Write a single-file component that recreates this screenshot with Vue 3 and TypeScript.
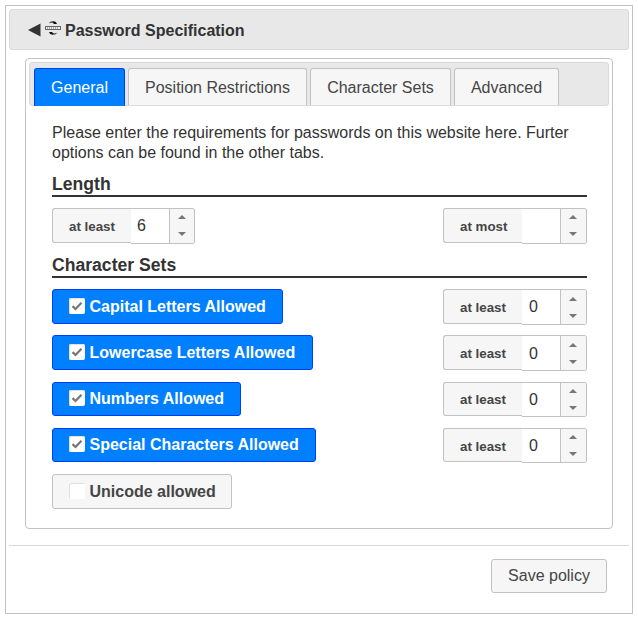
<script setup lang="ts">
import { ref } from 'vue'

interface CharacterSet {
  label: string
  allowed: boolean
  minimum?: string
  height: number
  gap: number
  width: number
}

const tabs = [
  { label: 'General', width: 91 },
  { label: 'Position Restrictions', width: 179 },
  { label: 'Character Sets', width: 141 },
  { label: 'Advanced', width: 105 },
]
const activeTab = ref('General')

const lengths = ref([
  { label: 'at least', value: '6' },
  { label: 'at most', value: '' },
])

const sets = ref<CharacterSet[]>([
  { label: 'Capital Letters Allowed', allowed: true, minimum: '0', width: 231, height: 35, gap: 11 },
  { label: 'Lowercase Letters Allowed', allowed: true, minimum: '0', width: 261, height: 35, gap: 12 },
  { label: 'Numbers Allowed', allowed: true, minimum: '0', width: 189, height: 34, gap: 12 },
  { label: 'Special Characters Allowed', allowed: true, minimum: '0', width: 264, height: 34, gap: 12 },
  { label: 'Unicode allowed', allowed: false, width: 180, height: 35, gap: 0 },
])

function step(item: { value?: string; minimum?: string }, key: 'value' | 'minimum', delta: number) {
  item[key] = String(Math.max(0, Number(item[key] || 0) + delta))
}
</script>

<template>
  <main class="dialog">
    <header class="titlebar">
      <svg class="back" viewBox="0 0 13 14"><path d="M0 7 12.5 .5v13z" /></svg>
      <svg class="logo" viewBox="0 0 16 14">
        <path d="M3.5 2.5Q5 0 9 .2l1.5 1V.2L12 3H8l1-1Q6 1 3.5 2.5z" fill="#111" />
        <path d="M12.5 11.5Q11 14 7 13.8l-1.5-1v1L4 11h4l-1 1q3 1 5.500-.5z" fill="#111" />
        <rect x=".5" y="5.500" width="15" height="3" fill="#eee" stroke="#666" />
        <path d="M2.500 6v2M4.500 6v2M6.500 6v2M8.500 6v2M10.500 6v2M12.500 6v2" stroke="#999" stroke-width=".8" />
      </svg>
      <h1>Password Specification</h1>
    </header>

    <section class="panel">
      <nav class="tabs">
        <button
          v-for="tab in tabs"
          :key="tab.label"
          class="tab"
          :class="{ active: tab.label === activeTab }"
          :style="{ width: tab.width + 'px' }"
          @click="activeTab = tab.label"
        >{{ tab.label }}</button>
      </nav>

      <div class="content">
        <p>Please enter the requirements for passwords on this website here. Furter<br>options can be found in the other tabs.</p>

        <h2>Length</h2>
        <div class="row lengths">
          <div v-for="item in lengths" :key="item.label" class="field" :class="{ first: item.label === 'at least' }">
            <span class="caption">{{ item.label }}</span>
            <span class="spinner">
              <span class="value">{{ item.value }}</span>
              <span class="steps">
                <svg viewBox="0 0 8 4" @click="step(item, 'value', 1)"><path d="M0 4 4 0 8 4z" /></svg>
                <svg viewBox="0 0 8 4" @click="step(item, 'value', -1)"><path d="M0 0h8L4 4z" /></svg>
              </span>
            </span>
          </div>
        </div>

        <h2 class="second">Character Sets</h2>
        <div
          v-for="item in sets"
          :key="item.label"
          class="row set"
          :class="{ compact: item.height === 34 }"
          :style="{ height: item.height + 'px', marginBottom: item.gap + 'px' }"
        >
          <button
            class="toggle"
            :class="{ on: item.allowed }"
            :style="{ width: item.width + 'px' }"
            @click="item.allowed = !item.allowed"
          >
            <span class="box">
              <svg v-if="item.allowed" viewBox="0 0 16 16"><path d="M3.500 8.200 6.500 11 12.500 4.800" /></svg>
            </span>
            {{ item.label }}
          </button>
          <div v-if="item.minimum !== undefined" class="field">
            <span class="caption">at least</span>
            <span class="spinner">
              <span class="value">{{ item.minimum }}</span>
              <span class="steps">
                <svg viewBox="0 0 8 4" @click="step(item, 'minimum', 1)"><path d="M0 4 4 0 8 4z" /></svg>
                <svg viewBox="0 0 8 4" @click="step(item, 'minimum', -1)"><path d="M0 0h8L4 4z" /></svg>
              </span>
            </span>
          </div>
        </div>
      </div>
    </section>

    <footer><button class="save">Save policy</button></footer>
  </main>
</template>

<style>
body { background: #fff; }
</style>

<style scoped>
* { box-sizing: border-box; }
.dialog {
  width: 628px;
  height: 609px;
  margin: 5px;
  padding: 3px;
  border: 1px solid #c2c2c2;
  background: #fff;
  color: #333;
  font: 16px/20px "Liberation Sans", Arial, sans-serif;
}
button { padding: 0; font: inherit; cursor: pointer; }
.titlebar {
  display: flex;
  align-items: center;
  height: 41px;
  padding-left: 18px;
  border: 1px solid #dadada;
  border-radius: 3px;
  background: #e8e8e8;
}
.back { width: 13px; height: 14px; margin-top: 1px; fill: #333; }
.logo { width: 16px; height: 14px; margin: 0 4px 4px; }
h1 { margin: 2px 0 0; font-size: 16px; line-height: 20px; white-space: nowrap; }
.panel {
  height: 471px;
  margin: 8px 16px 0;
  padding: 3px;
  border: 1px solid #c2c2c2;
  border-radius: 4px;
}
.tabs {
  display: flex;
  gap: 3px;
  height: 44px;
  padding: 5px 4px 0;
  border: 1px solid #dadada;
  border-radius: 3px;
  background: #e8e8e8;
}
.tab {
  height: 37px;
  padding-top: 1px;
  border: 1px solid #c2c2c2;
  border-bottom: 0;
  border-radius: 3px 3px 0 0;
  background: #f6f6f6;
  color: #454545;
  white-space: nowrap;
}
.tab.active { height: 38px; padding-top: 0; border-color: #003eff; background: #007fff; color: #fff; }
.content { padding: 17px 22px 0 23px; }
p { margin: 0; white-space: nowrap; }
h2 {
  height: 24px;
  margin: 10px 0 11px;
  border-bottom: 2px solid #333;
  font-size: 17.6px;
  line-height: 22px;
}
h2.second { margin: 11px 0 11px; }
.row { display: flex; justify-content: space-between; align-items: stretch; }
.lengths { height: 35px; }
.field { display: flex; width: 144px; margin-left: auto; }
.field.first { width: 143px; margin-left: 0; }
.caption {
  display: flex;
  align-items: center;
  width: 79px;
  padding: 2px 0 0 16px;
  border: 1px solid #c2c2c2;
  border-right: 0;
  border-radius: 3px 0 0 3px;
  background: #f6f6f6;
  color: #454545;
  font-size: 13.33px;
  font-weight: bold;
  white-space: nowrap;
}
.set:nth-last-child(2) .caption { padding-top: 4px; }
.spinner {
  display: flex;
  flex: 1;
  margin-bottom: -1px;
  border: 1px solid #c2c2c2;
  border-left: 0;
  border-radius: 0 3px 3px 0;
}
.value { width: 38px; padding: 7px 0 0 7px; color: #333; }
.first .value { padding-left: 6px; }
.set:nth-last-child(4) .value { padding-top: 8px; }
.steps {
  display: flex;
  flex: 1;
  flex-direction: column;
  align-items: center;
  justify-content: space-between;
  padding: 6px 2px 7px 0;
  border-left: 1px solid #c2c2c2;
  border-radius: 0 2px 2px 0;
  background: #f6f6f6;
}
.first .steps { padding-right: 1px; }
.set .steps { padding-top: 7px; padding-bottom: 6px; }
.set.compact .steps { padding-top: 6px; }
.steps svg { width: 8px; height: 4px; fill: #777; cursor: pointer; }
.toggle {
  display: flex;
  align-items: center;
  gap: 4.5px;
  padding-left: 16px;
  border: 1px solid #c2c2c2;
  border-radius: 3px;
  background: #f6f6f6;
  color: #454545;
  font-weight: bold;
  white-space: nowrap;
}
.toggle.on { border-color: #003eff; background: #007fff; color: #fff; }
.box {
  align-self: flex-start;
  width: 16px;
  height: 16px;
  margin-top: 8px;
  border-radius: 2px;
  background: #fff;
  box-shadow: inset 1px 1px #e0e0e0;
}
.compact .box { margin-top: 7px; }
.box svg { display: block; fill: none; stroke: #777; stroke-width: 2.3; }
footer {
  display: flex;
  justify-content: flex-end;
  margin-top: 16px;
  padding: 13px 22px 0 0;
  border-top: 1px solid #dadada;
}
.save {
  width: 116px;
  height: 34px;
  border: 1px solid #c2c2c2;
  border-radius: 3px;
  background: #f6f6f6;
  color: #454545;
}
</style>
